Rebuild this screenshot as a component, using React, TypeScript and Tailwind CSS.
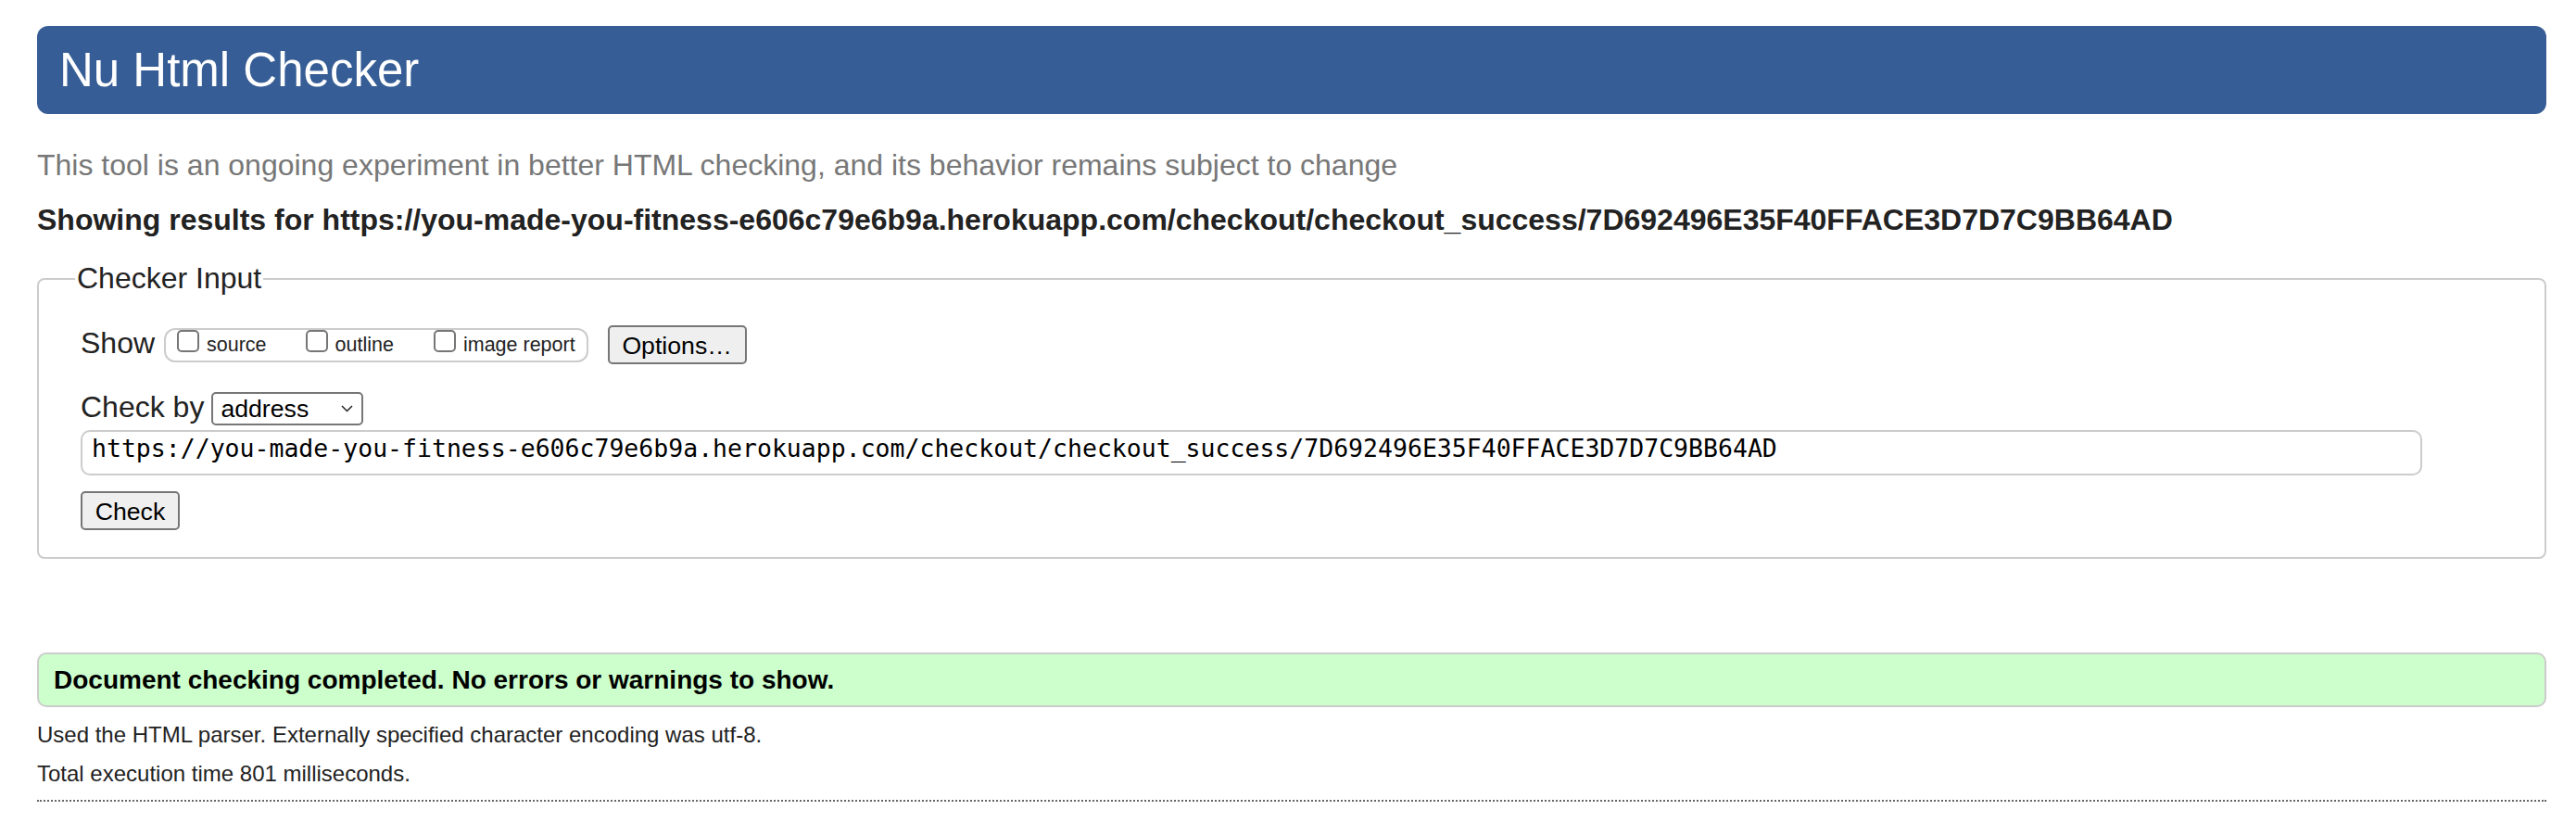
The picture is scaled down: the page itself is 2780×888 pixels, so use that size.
import React from "react";

const URL =
  "https://you-made-you-fitness-e606c79e6b9a.herokuapp.com/checkout/checkout_success/7D692496E35F40FFACE3D7D7C9BB64AD";

function Box() {
  return (
    <span className="mb-[9px] block h-[24px] w-[24px] shrink-0 rounded-[5px] border-2 border-[#767676] bg-white" />
  );
}

export default function App() {
  return (
    <div className="min-h-[888px] bg-white pl-[40px] pr-[32px] pt-[28px] font-['Liberation_Sans',Arial,sans-serif] text-[#222]">
      <header className="flex h-[95px] items-center rounded-[12px] bg-[#365d95] pl-[24px]">
        <h1 className="text-[51px] font-normal leading-none text-white">Nu Html Checker</h1>
      </header>

      <p className="mt-[36px] whitespace-nowrap text-[32px] leading-[38px] text-[#777]">
        This tool is an ongoing experiment in better HTML checking, and its behavior remains subject to change
      </p>
      <p className="mt-[21px] whitespace-nowrap text-[32px] font-bold leading-[38px] text-[#222]">
        Showing results for {URL}
      </p>

      <fieldset className="mt-[26px] rounded-[8px] border-2 border-[#ccc] pb-[29px] pl-[45px] pt-[32px]">
        <legend className="-ml-[6px] px-[2px] text-[32px] leading-[normal]">Checker Input</legend>

        <div className="flex h-[42px] items-center">
          <span className="mb-[4px] text-[32px]">Show</span>
          <div className="ml-[10px] flex h-[37px] items-center rounded-[12px] border-2 border-[#ccc] pl-[12px] pr-[12px] text-[21.5px]">
            <label className="flex items-center">
              <Box />
              <span className="ml-[8px]">source</span>
            </label>
            <label className="ml-[42px] flex items-center">
              <Box />
              <span className="ml-[8px]">outline</span>
            </label>
            <label className="ml-[43px] flex items-center">
              <Box />
              <span className="ml-[8px]">image report</span>
            </label>
          </div>
          <button className="ml-[21px] h-[42px] w-[150px] rounded-[5px] border-2 border-[#767676] bg-[#efefef] text-[26.67px] text-black">
            Options…
          </button>
        </div>

        <div className="mt-[30px] flex h-[36px] items-center">
          <span className="mb-[5px] text-[32px]">Check by</span>
          <div className="ml-[8px] flex h-[36px] w-[164px] items-center justify-between rounded-[5px] border-2 border-[#767676] bg-white pl-[8px] pr-[9px] text-[26.67px] text-black">
            <span>address</span>
            <svg width="13" height="8" viewBox="0 0 13 8" fill="none">
              <polyline points="1,1 6.5,6.5 12,1" stroke="#222" strokeWidth="1.5" />
            </svg>
          </div>
        </div>

        <div className="mt-[5px] flex h-[49px] w-[2527px] items-center whitespace-nowrap rounded-[10px] border-2 border-[#ccc] pb-[10px] pl-[10px] font-['DejaVu_Sans_Mono',monospace] text-[26.5px] text-black">
          {URL}
        </div>

        <div className="mt-[17px]">
          <button className="h-[42px] w-[107px] rounded-[5px] border-2 border-[#767676] bg-[#efefef] text-[26.67px] text-black">
            Check
          </button>
        </div>
      </fieldset>

      <div className="mt-[101px] flex h-[59px] items-center rounded-[10px] border-2 border-[#ccc] bg-[#ccffcc] pl-[16px] text-[28px] font-bold text-black">
        Document checking completed. No errors or warnings to show.
      </div>

      <p className="mt-[16px] text-[24px] leading-[28px] text-[#222]">
        Used the HTML parser. Externally specified character encoding was utf-8.
      </p>
      <p className="mt-[14px] text-[24px] leading-[28px] text-[#222]">Total execution time 801 milliseconds.</p>
      <div className="mt-[14px] border-t-2 border-dotted border-[#666]" />
    </div>
  );
}
